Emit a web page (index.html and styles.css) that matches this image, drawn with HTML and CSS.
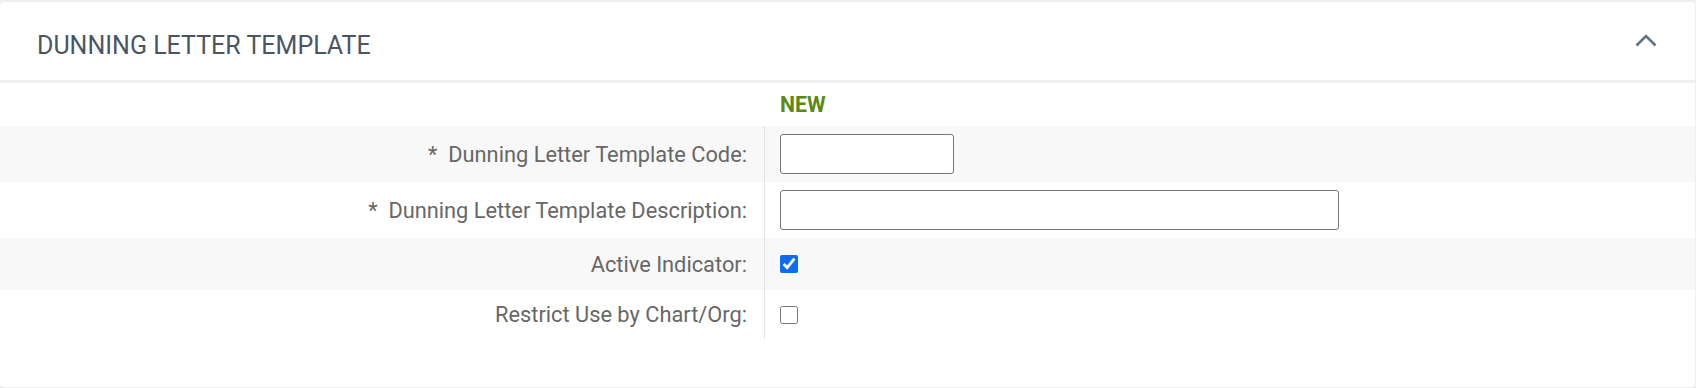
FILE: index.html
```html
<!DOCTYPE html>
<html>
<head>
<meta charset="utf-8">
<link rel="stylesheet" href="styles.css">
</head>
<body>
<section class="card">
  <header class="card-header">
    <h2 class="card-title">DUNNING LETTER TEMPLATE</h2>
    <svg class="chevron" width="22" height="15" viewBox="0 0 22 15"><path d="M1.5 13.5 L11 4 L20.5 13.5" fill="none" stroke="#5e7482" stroke-width="2.6"/></svg>
  </header>
  <div class="form">
    <div class="row row-status">
      <div class="cell-label"></div>
      <div class="cell-value status">NEW</div>
    </div>
    <div class="row row-input shaded">
      <div class="cell-label bordered">*&nbsp; Dunning Letter Template Code:</div>
      <div class="cell-value"><input type="text" class="input input-code"></div>
    </div>
    <div class="row row-input">
      <div class="cell-label bordered">*&nbsp; Dunning Letter Template Description:</div>
      <div class="cell-value"><input type="text" class="input input-desc"></div>
    </div>
    <div class="row row-check shaded">
      <div class="cell-label bordered">Active Indicator:</div>
      <div class="cell-value"><input type="checkbox" class="check" checked></div>
    </div>
    <div class="row row-check row-last">
      <div class="cell-label bordered">Restrict Use by Chart/Org:</div>
      <div class="cell-value"><input type="checkbox" class="check"></div>
    </div>
  </div>
</section>
</body>
</html>
```
FILE: styles.css
```css
html, body {
  margin: 0;
  padding: 0;
}
body {
  background: #efefef;
  font-family: Roboto, "Liberation Sans", Arial, sans-serif;
  padding: 2px 1px 2px 0;
}
.card {
  background: #fff;
  border-radius: 4px;
  height: 385px;
  box-sizing: border-box;
}
.card-header {
  height: 81px;
  box-sizing: border-box;
  display: flex;
  align-items: center;
  justify-content: space-between;
  padding: 0 38px 0 37px;
  border-bottom: 3px solid #f0f0f0;
}
.card-title {
  margin: 9px 0 0 0;
  font-size: 25px;
  font-weight: 400;
  color: #4a5563;
  line-height: 30px;
}
.chevron {
  display: block;
  margin-top: -4px;
}
.form {
  display: flex;
  flex-direction: column;
}
.row {
  display: flex;
}
.shaded {
  background: #f8f8f8;
}
.row-status {
  height: 43px;
}
.row-input {
  height: 56px;
}
.row-check {
  height: 52px;
}
.row-last {
  height: 49px;
}
.cell-label {
  width: 764px;
  flex: none;
  box-sizing: border-box;
  padding-right: 17px;
  text-align: right;
  display: flex;
  align-items: center;
  justify-content: flex-end;
  font-size: 21.8px;
  color: #676767;
}
.bordered {
  border-right: 1px solid #dde6e6;
  width: 765px;
}
.cell-value {
  flex: 1;
  display: flex;
  align-items: center;
  padding-left: 15px;
}
.row-status .cell-value {
  padding-left: 16px;
}
.status {
  color: #5a8a14;
  font-weight: 700;
  font-size: 21.3px;
  padding-bottom: 1px;
}
.input {
  box-sizing: border-box;
  height: 40px;
  border: 1px solid #767676;
  border-radius: 3px;
  margin: 0;
  background: #fff;
}
.input-code {
  width: 174px;
}
.input-desc {
  width: 559px;
}
.check {
  width: 18px;
  height: 18px;
  margin: 0;
  accent-color: #0b6cf2;
}
```
